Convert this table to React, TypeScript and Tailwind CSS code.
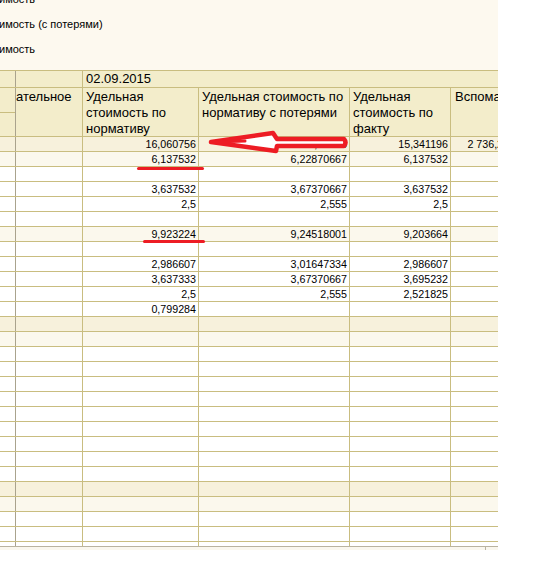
const A = "bg-[#f7f1dc]"
const B = "bg-[#fbf8ed]"
const W = "bg-white"

type Row = { bg: string; c3?: string; c4?: string; c5?: string; c6?: string }

const rows: Row[] = [
  { bg: A, c3: "16,060756", c4: "16,40233", c5: "15,341196", c6: "2 736,25" },
  { bg: B, c3: "6,137532", c4: "6,22870667", c5: "6,137532" },
  { bg: W },
  { bg: W, c3: "3,637532", c4: "3,67370667", c5: "3,637532" },
  { bg: W, c3: "2,5", c4: "2,555", c5: "2,5" },
  { bg: W },
  { bg: B, c3: "9,923224", c4: "9,24518001", c5: "9,203664" },
  { bg: W },
  { bg: W, c3: "2,986607", c4: "3,01647334", c5: "2,986607" },
  { bg: W, c3: "3,637333", c4: "3,67370667", c5: "3,695232" },
  { bg: W, c3: "2,5", c4: "2,555", c5: "2,521825" },
  { bg: W, c3: "0,799284" },
  { bg: A },
  { bg: B },
  { bg: W },
  { bg: W },
  { bg: W },
  { bg: W },
  { bg: W },
  { bg: W },
  { bg: W },
  { bg: W },
  { bg: W },
  { bg: A },
  { bg: B },
  { bg: W },
  { bg: W },
]

function DataRow({ row }: { row: Row }) {
  return (
    <div className={`${row.bg} flex h-[15px] border-b border-[#c9bd80] text-[10.7px] leading-[14px]`}>
      <div className="w-[16px] border-r border-[#aaa38d]" />
      <div className="w-[67px] border-r border-[#c9bd80]" />
      <div className="w-[116px] border-r border-[#c9bd80] pr-[2px] text-right">{row.c3}</div>
      <div className="w-[151px] border-r border-[#c9bd80] pr-[2px] text-right">{row.c4}</div>
      <div className="w-[101px] border-r border-[#c9bd80] pr-[2px] text-right">{row.c5}</div>
      <div className="w-[60px] whitespace-nowrap pr-[2px] text-right">{row.c6}</div>
    </div>
  )
}

export default function App() {
  return (
    <div className="relative min-h-[584px] bg-white font-['Liberation_Sans',Arial,sans-serif] text-black">
      <div className="w-[498px] overflow-hidden bg-[#fdf9ef]">
        {/* шапка отчёта */}
        <div className="h-[70px] overflow-hidden text-[11px]">
          <div className="-mt-[13px] -ml-px">
            <div className="h-[25px] leading-[25px]">имость</div>
            <div className="h-[25px] leading-[25px]">имость (с потерями)</div>
            <div className="h-[25px] leading-[25px]">имость</div>
          </div>
        </div>

        {/* таблица */}
        <div className="w-[560px] border-t border-[#c9bd80] text-[13px]">
          <div className="flex h-[17px] border-b border-[#c9bd80] bg-[#f3edcb] leading-[16px]">
            <div className="w-[16px] border-r border-[#aaa38d]" />
            <div className="w-[67px] border-r border-[#c9bd80]" />
            <div className="flex-1 pl-[3px]">02.09.2015</div>
          </div>
          <div className="flex h-[49px] border-b border-[#c9bd80] bg-[#f3edcb] leading-[16px]">
            <div className="flex w-[16px] flex-col border-r border-[#aaa38d]">
              <div className="h-[25px] border-b border-[#c9bd80]" />
            </div>
            <div className="w-[67px] border-r border-[#c9bd80] pt-px whitespace-nowrap">ательное</div>
            <div className="w-[116px] border-r border-[#c9bd80] pl-[3px] pt-px">
              Удельная<br />стоимость по<br />нормативу
            </div>
            <div className="w-[151px] border-r border-[#c9bd80] pl-[3px] pt-px">
              Удельная стоимость по<br />нормативу с потерями
            </div>
            <div className="w-[101px] border-r border-[#c9bd80] pl-[3px] pt-px">
              Удельная<br />стоимость по<br />факту
            </div>
            <div className="w-[60px] whitespace-nowrap pl-[4px] pt-px">Вспомагательные</div>
          </div>

          {rows.map((row, i) => (
            <DataRow key={i} row={row} />
          ))}

          <div className="flex h-[5px] border-b border-[#b9b3a1] bg-white">
            <div className="w-[16px] border-r border-[#aaa38d]" />
            <div className="w-[67px] border-r border-[#c9bd80]" />
            <div className="w-[116px] border-r border-[#c9bd80]" />
            <div className="w-[151px] border-r border-[#c9bd80]" />
            <div className="w-[101px] border-r border-[#c9bd80]" />
          </div>
          <div className="flex h-[3px] bg-[#faf7ee]">
            <div className="ml-[485px] w-px bg-[#b9b3a1]" />
          </div>
        </div>
      </div>

      {/* красные пометки */}
      <svg className="pointer-events-none absolute left-0 top-0" width="536" height="584">
        <path
          d="M211 142 L273 133 L277 139 L344 139 Q347 142.5 344 146 L277 146 L276 151 Z"
          fill="#ffffff"
          stroke="#ed1c24"
          strokeWidth="4.5"
          strokeLinejoin="round"
        />
        <path d="M214 142 L245 141" stroke="#ed1c24" strokeWidth="3" strokeLinecap="round" />
      </svg>
      <div className="absolute left-[137px] top-[167px] h-[3px] w-[67px] rounded-full bg-[#ed1c24]" />
      <div className="absolute left-[143px] top-[240px] h-[3px] w-[62px] rounded-full bg-[#ed1c24]" />
    </div>
  )
}
